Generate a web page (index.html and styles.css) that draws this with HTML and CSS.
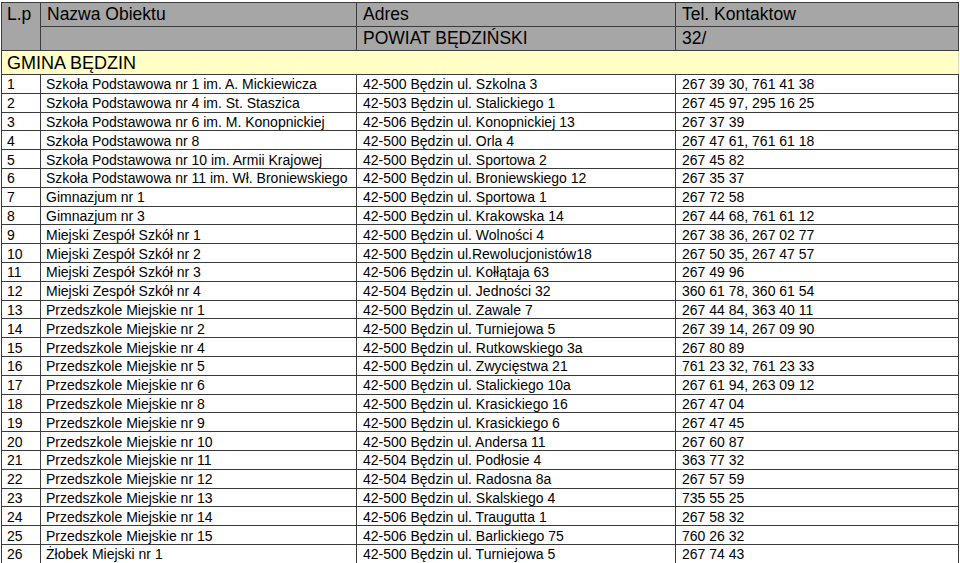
FILE: index.html
```html
<!DOCTYPE html>
<html lang="pl">
<head>
<meta charset="utf-8">
<title>Powiat Będziński</title>
<link rel="stylesheet" href="styles.css">
</head>
<body>
<table class="list">
  <colgroup>
    <col class="c-lp">
    <col class="c-name">
    <col class="c-addr">
    <col class="c-tel">
  </colgroup>
  <thead>
    <tr class="head1">
      <th rowspan="2" class="lp">L.p</th>
      <th>Nazwa Obiektu</th>
      <th>Adres</th>
      <th>Tel. Kontaktow</th>
    </tr>
    <tr class="head2">
      <th></th>
      <th>POWIAT BĘDZIŃSKI</th>
      <th>32/</th>
    </tr>
  </thead>
  <tbody>
    <tr class="group"><td colspan="4">GMINA BĘDZIN</td></tr>
    <tr><td>1</td><td>Szkoła Podstawowa nr 1 im. A. Mickiewicza</td><td>42-500 Będzin ul. Szkolna 3</td><td>267 39 30, 761 41 38</td></tr>
    <tr><td>2</td><td>Szkoła Podstawowa nr 4 im. St. Staszica</td><td>42-503 Będzin ul. Stalickiego 1</td><td>267 45 97, 295 16 25</td></tr>
    <tr><td>3</td><td>Szkoła Podstawowa nr 6 im. M. Konopnickiej</td><td>42-506 Będzin ul. Konopnickiej 13</td><td>267 37 39</td></tr>
    <tr><td>4</td><td>Szkoła Podstawowa nr 8</td><td>42-500 Będzin ul. Orla 4</td><td>267 47 61, 761 61 18</td></tr>
    <tr><td>5</td><td>Szkoła Podstawowa nr 10 im. Armii Krajowej</td><td>42-500 Będzin ul. Sportowa 2</td><td>267 45 82</td></tr>
    <tr><td>6</td><td>Szkoła Podstawowa nr 11 im. Wł. Broniewskiego</td><td>42-500 Będzin ul. Broniewskiego 12</td><td>267 35 37</td></tr>
    <tr><td>7</td><td>Gimnazjum nr 1</td><td>42-500 Będzin ul. Sportowa 1</td><td>267 72 58</td></tr>
    <tr><td>8</td><td>Gimnazjum nr 3</td><td>42-500 Będzin ul. Krakowska 14</td><td>267 44 68, 761 61 12</td></tr>
    <tr><td>9</td><td>Miejski Zespół Szkół nr 1</td><td>42-500 Będzin ul. Wolności 4</td><td>267 38 36, 267 02 77</td></tr>
    <tr><td>10</td><td>Miejski Zespół Szkół nr 2</td><td>42-500 Będzin ul.Rewolucjonistów18</td><td>267 50 35, 267 47 57</td></tr>
    <tr><td>11</td><td>Miejski Zespół Szkół nr 3</td><td>42-506 Będzin ul. Kołłątaja 63</td><td>267 49 96</td></tr>
    <tr><td>12</td><td>Miejski Zespół Szkół nr 4</td><td>42-504 Będzin ul. Jedności 32</td><td>360 61 78, 360 61 54</td></tr>
    <tr><td>13</td><td>Przedszkole Miejskie nr 1</td><td>42-500 Będzin ul. Zawale 7</td><td>267 44 84, 363 40 11</td></tr>
    <tr><td>14</td><td>Przedszkole Miejskie nr 2</td><td>42-500 Będzin ul. Turniejowa 5</td><td>267 39 14, 267 09 90</td></tr>
    <tr><td>15</td><td>Przedszkole Miejskie nr 4</td><td>42-500 Będzin ul. Rutkowskiego 3a</td><td>267 80 89</td></tr>
    <tr><td>16</td><td>Przedszkole Miejskie nr 5</td><td>42-500 Będzin ul. Zwycięstwa 21</td><td>761 23 32, 761 23 33</td></tr>
    <tr><td>17</td><td>Przedszkole Miejskie nr 6</td><td>42-500 Będzin ul. Stalickiego 10a</td><td>267 61 94, 263 09 12</td></tr>
    <tr><td>18</td><td>Przedszkole Miejskie nr 8</td><td>42-500 Będzin ul. Krasickiego 16</td><td>267 47 04</td></tr>
    <tr><td>19</td><td>Przedszkole Miejskie nr 9</td><td>42-500 Będzin ul. Krasickiego 6</td><td>267 47 45</td></tr>
    <tr><td>20</td><td>Przedszkole Miejskie nr 10</td><td>42-500 Będzin ul. Andersa 11</td><td>267 60 87</td></tr>
    <tr><td>21</td><td>Przedszkole Miejskie nr 11</td><td>42-504 Będzin ul. Podłosie 4</td><td>363 77 32</td></tr>
    <tr><td>22</td><td>Przedszkole Miejskie nr 12</td><td>42-504 Będzin ul. Radosna 8a</td><td>267 57 59</td></tr>
    <tr><td>23</td><td>Przedszkole Miejskie nr 13</td><td>42-500 Będzin ul. Skalskiego 4</td><td>735 55 25</td></tr>
    <tr><td>24</td><td>Przedszkole Miejskie nr 14</td><td>42-506 Będzin ul. Traugutta 1</td><td>267 58 32</td></tr>
    <tr><td>25</td><td>Przedszkole Miejskie nr 15</td><td>42-506 Będzin ul. Barlickiego 75</td><td>760 26 32</td></tr>
    <tr><td>26</td><td>Żłobek Miejski nr 1</td><td>42-500 Będzin ul. Turniejowa 5</td><td>267 74 43</td></tr>
  </tbody>
</table>
</body>
</html>
```

FILE: styles.css
```css
html, body {
  margin: 0;
  padding: 0;
  background: #ffffff;
}

body {
  padding: 2px 0 0 1px;
  font-family: "Liberation Sans", Arial, sans-serif;
  color: #000000;
}

.list {
  border-collapse: collapse;
  table-layout: fixed;
  width: 957px;
}

.c-lp { width: 39px; }
.c-name { width: 316px; }
.c-addr { width: 319px; }
.c-tel { width: 283px; }

.list th,
.list td {
  border: 1px solid #3c3c3c;
  padding: 0 0 0 5px;
  text-align: left;
  font-weight: normal;
  white-space: nowrap;
  overflow: hidden;
}

.list th {
  background: #a6a6a6;
  font-size: 17.5px;
  line-height: 20px;
}

.head1 th { height: 22px; vertical-align: top; padding-top: 1px; }
.head2 th { height: 22px; vertical-align: top; padding-top: 1px; }
.list th.lp { vertical-align: top; padding-top: 1px; }

.group td {
  background: #ffffc6;
  font-size: 18px;
  height: 23px;
  line-height: 22px;
  padding-left: 5px;
  border-right-color: #d8d8c0;
}

.list tbody tr:not(.group) td {
  font-size: 14px;
  height: 18.8px;
  line-height: 16px;
  padding-top: 1px;
  padding-bottom: 0;
  box-sizing: border-box;
}

.list tbody td:nth-child(3),
.list tbody td:nth-child(4),
.list thead th:nth-child(n+2) {
  padding-left: 6px;
}
```
